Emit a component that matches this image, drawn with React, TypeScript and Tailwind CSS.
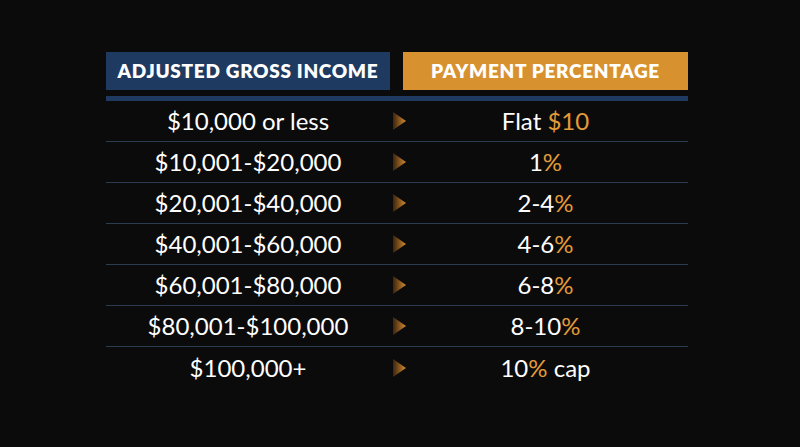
const rows: { income: string; pct: React.ReactNode }[] = [
  { income: "$10,000 or less", pct: <>Flat <span className="text-[#e39b38]">$10</span></> },
  { income: "$10,001-$20,000", pct: <>1<span className="text-[#e39b38]">%</span></> },
  { income: "$20,001-$40,000", pct: <>2-4<span className="text-[#e39b38]">%</span></> },
  { income: "$40,001-$60,000", pct: <>4-6<span className="text-[#e39b38]">%</span></> },
  { income: "$60,001-$80,000", pct: <>6-8<span className="text-[#e39b38]">%</span></> },
  { income: "$80,001-$100,000", pct: <>8-10<span className="text-[#e39b38]">%</span></> },
  { income: "$100,000+", pct: <>10<span className="text-[#e39b38]">%</span> cap</> },
];

function Arrow() {
  return (
    <svg width="13" height="18" viewBox="0 0 13 18" className="ml-[3px] shrink-0">
      <defs>
        <linearGradient id="arr" x1="0" y1="0" x2="1" y2="0">
          <stop offset="0" stopColor="#3a2410" />
          <stop offset="1" stopColor="#d58a2e" />
        </linearGradient>
      </defs>
      <polygon points="0,0 13,9 0,18" fill="url(#arr)" />
    </svg>
  );
}

export default function App() {
  return (
    <div
      className="w-[800px] h-[447px] bg-[#0b0b0c] pt-[52px] pl-[106px]"
      style={{ fontFamily: "Lato, 'Open Sans', sans-serif" }}
    >
      <div className="w-[582px]">
        <div className="grid grid-cols-[284px_13px_285px] h-[38px]">
          <div className="bg-[#1f3a60] flex items-center justify-center text-white font-extrabold text-[19px] tracking-[0.7px]">
            ADJUSTED GROSS INCOME
          </div>
          <div />
          <div className="bg-[#d8912f] flex items-center justify-center text-white font-extrabold text-[19px] tracking-[0.7px]">
            PAYMENT PERCENTAGE
          </div>
        </div>
        <div className="mt-[6px] h-[5px] bg-[#1f3a60]" />
        {rows.map((r, i) => (
          <div
            key={i}
            className={
              "grid grid-cols-[284px_13px_285px] h-[41px] items-center text-white text-[24px] " +
              (i < rows.length - 1 ? "border-b border-[#2c3d52]" : "")
            }
          >
            <div className="text-center">{r.income}</div>
            <div className="flex items-center overflow-visible">
              <Arrow />
            </div>
            <div className="text-center">{r.pct}</div>
          </div>
        ))}
      </div>
    </div>
  );
}
